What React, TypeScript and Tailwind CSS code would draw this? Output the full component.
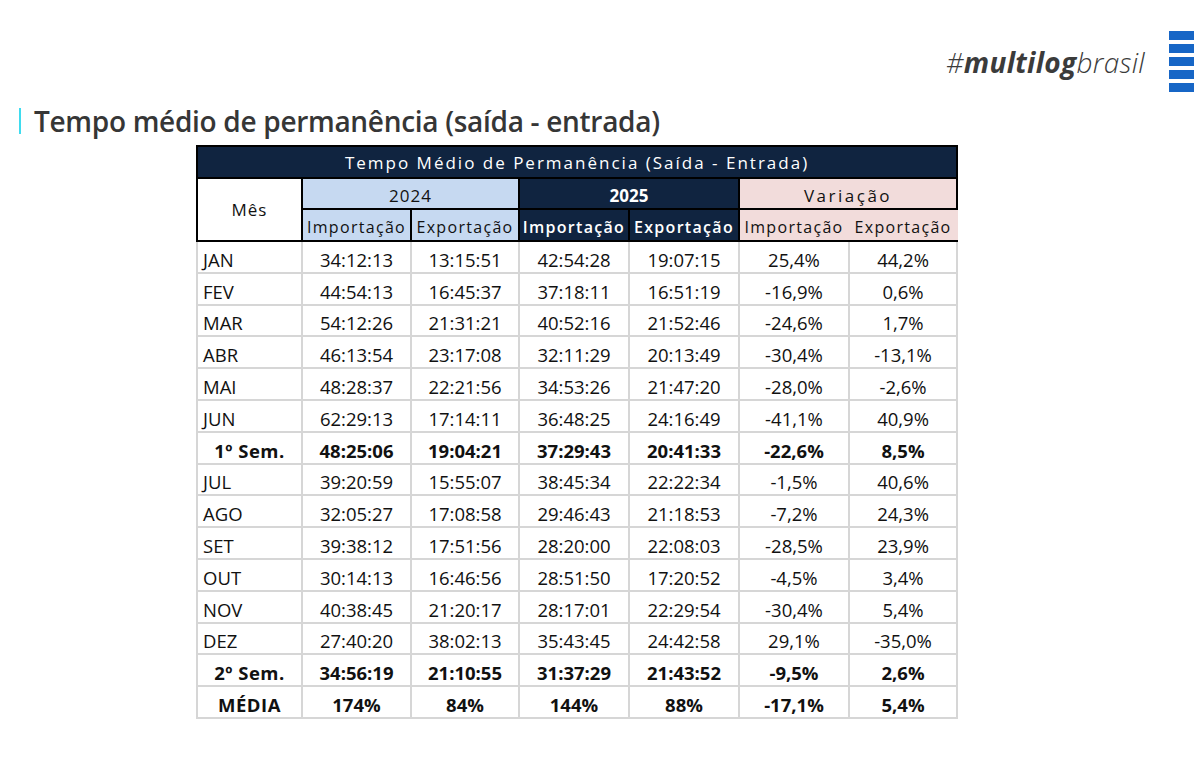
import React from "react";

type Row = {
  mes: string;
  vals: string[];
  bold?: boolean;
};

const rows: Row[] = [
  { mes: "JAN", vals: ["34:12:13", "13:15:51", "42:54:28", "19:07:15", "25,4%", "44,2%"] },
  { mes: "FEV", vals: ["44:54:13", "16:45:37", "37:18:11", "16:51:19", "-16,9%", "0,6%"] },
  { mes: "MAR", vals: ["54:12:26", "21:31:21", "40:52:16", "21:52:46", "-24,6%", "1,7%"] },
  { mes: "ABR", vals: ["46:13:54", "23:17:08", "32:11:29", "20:13:49", "-30,4%", "-13,1%"] },
  { mes: "MAI", vals: ["48:28:37", "22:21:56", "34:53:26", "21:47:20", "-28,0%", "-2,6%"] },
  { mes: "JUN", vals: ["62:29:13", "17:14:11", "36:48:25", "24:16:49", "-41,1%", "40,9%"] },
  { mes: "1º Sem.", vals: ["48:25:06", "19:04:21", "37:29:43", "20:41:33", "-22,6%", "8,5%"], bold: true },
  { mes: "JUL", vals: ["39:20:59", "15:55:07", "38:45:34", "22:22:34", "-1,5%", "40,6%"] },
  { mes: "AGO", vals: ["32:05:27", "17:08:58", "29:46:43", "21:18:53", "-7,2%", "24,3%"] },
  { mes: "SET", vals: ["39:38:12", "17:51:56", "28:20:00", "22:08:03", "-28,5%", "23,9%"] },
  { mes: "OUT", vals: ["30:14:13", "16:46:56", "28:51:50", "17:20:52", "-4,5%", "3,4%"] },
  { mes: "NOV", vals: ["40:38:45", "21:20:17", "28:17:01", "22:29:54", "-30,4%", "5,4%"] },
  { mes: "DEZ", vals: ["27:40:20", "38:02:13", "35:43:45", "24:42:58", "29,1%", "-35,0%"] },
  { mes: "2º Sem.", vals: ["34:56:19", "21:10:55", "31:37:29", "21:43:52", "-9,5%", "2,6%"], bold: true },
  { mes: "MÉDIA", vals: ["174%", "84%", "144%", "88%", "-17,1%", "5,4%"], bold: true },
];

function LogoBars() {
  return (
    <div className="flex flex-col gap-[4px]">
      {[0, 1, 2, 3, 4].map((i) => (
        <div key={i} className="w-[25px] h-[9px] bg-[#1766c6]" />
      ))}
    </div>
  );
}

export default function App() {
  return (
    <div
      className="w-[1203px] h-[763px] bg-white overflow-hidden"
      style={{ fontFamily: '"Open Sans", "Liberation Sans", sans-serif' }}
    >
      {/* marca */}
      <div className="flex justify-end items-center gap-[24px] pt-[31px] pr-[9px]">
        <div className="text-[28px] italic text-[#3b3b3b] tracking-[0.3px] leading-none">
          <span className="font-light">#</span>
          <span className="font-bold">multilog</span>
          <span className="font-light">brasil</span>
        </div>
        <LogoBars />
      </div>

      {/* titulo */}
      <div className="flex items-center mt-[12px] pl-[19px]">
        <div className="w-[2px] h-[26px] bg-[#3fdcef]" />
        <h1 className="ml-[13px] text-[28px] font-semibold text-[#363636] leading-[34px] tracking-[-0.3px]">
          Tempo médio de permanência (saída - entrada)
        </h1>
      </div>

      <div className="mt-[7px] pl-[196px]">
        <table className="border-collapse table-fixed w-[760px] text-[#111]">
          <colgroup>
            <col className="w-[105px]" />
            <col className="w-[109px]" />
            <col className="w-[108px]" />
            <col className="w-[110px]" />
            <col className="w-[110px]" />
            <col className="w-[110px]" />
            <col className="w-[108px]" />
          </colgroup>
          <thead>
            <tr className="h-[32px]">
              <th
                colSpan={7}
                className="bg-[#102440] text-white font-normal text-[17px] tracking-[2px] border-2 border-black pt-[2px]"
              >
                Tempo Médio de Permanência (Saída - Entrada)
              </th>
            </tr>
            <tr className="h-[31px]">
              <th rowSpan={2} className="bg-white font-normal text-[17px] tracking-[1px] border-2 border-black">
                Mês
              </th>
              <th colSpan={2} className="bg-[#c6d9f1] font-normal text-[17px] tracking-[1px] border-2 border-black align-bottom">
                2024
              </th>
              <th colSpan={2} className="bg-[#102440] text-white font-bold text-[17px] border-2 border-black align-bottom">
                2025
              </th>
              <th colSpan={2} className="bg-[#f2dcdb] font-normal text-[17px] tracking-[2.5px] border-2 border-black align-bottom">
                Variação
              </th>
            </tr>
            <tr className="h-[32px]">
              {["2024", "2024", "2025", "2025", "var", "var"].map((k, i) => (
                <th
                  key={i}
                  className={
                    "text-[16px] tracking-[1.3px] whitespace-nowrap overflow-hidden px-0 border-2 border-black align-bottom pb-[1px] " +
                    (k === "2024"
                      ? "bg-[#c6d9f1] font-normal"
                      : k === "2025"
                      ? "bg-[#102440] text-white font-semibold tracking-[0.8px]"
                      : "bg-[#f2dcdb] font-normal border-r-[#f2dcdb]")
                  }
                >
                  {i % 2 === 0 ? "Importação" : "Exportação"}
                </th>
              ))}
            </tr>
          </thead>
          <tbody>
            {rows.map((r) => (
              <tr key={r.mes} className="h-[31.8px]">
                <td
                  className={
                    "border-2 border-[#d6d6d6] text-[18.5px] leading-[24px] align-bottom pb-0 " +
                    (r.bold ? "font-bold text-center tracking-[0.5px]" : "pl-[5px] text-left")
                  }
                >
                  {r.mes}
                </td>
                {r.vals.map((v, i) => (
                  <td
                    key={i}
                    className={
                      "border-2 border-[#d6d6d6] text-[18.5px] leading-[24px] text-center align-bottom pb-0 " +
                      (r.bold ? "font-bold" : "")
                    }
                  >
                    {v}
                  </td>
                ))}
              </tr>
            ))}
          </tbody>
        </table>
      </div>
    </div>
  );
}
